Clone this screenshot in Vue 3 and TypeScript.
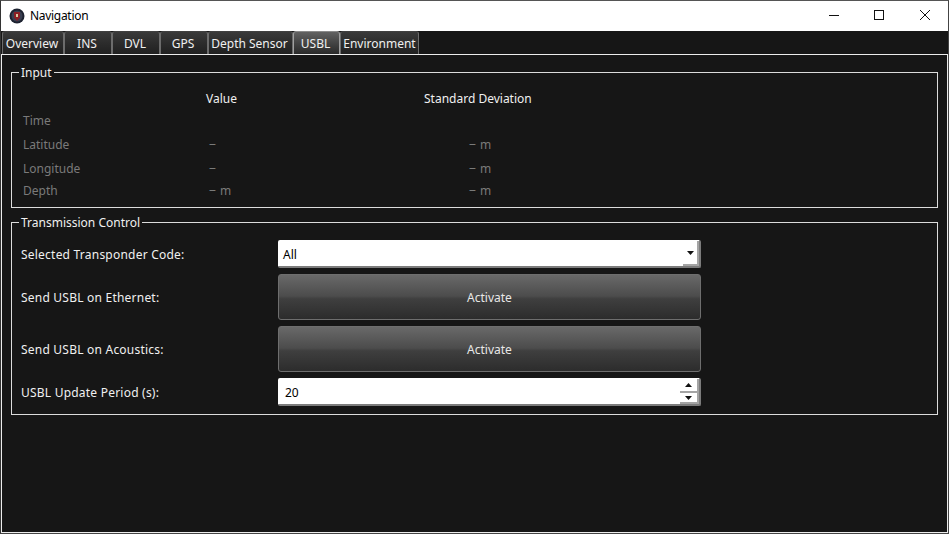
<script setup lang="ts">
const tabs = [
  { label: 'Overview', w: 62 },
  { label: 'INS', w: 48 },
  { label: 'DVL', w: 48 },
  { label: 'GPS', w: 48 },
  { label: 'Depth Sensor', w: 85 },
  { label: 'USBL', w: 47, active: true },
  { label: 'Environment', w: 79 },
]
</script>

<template>
  <div class="window">
    <header class="titlebar">
      <svg class="logo" width="16" height="16" viewBox="0 0 16 16">
        <circle cx="8" cy="8" r="7.5" fill="#1d2230" />
        <circle cx="8" cy="8" r="5.5" fill="#3a3f52" />
        <path d="M5 4h6v5.500L8 13 5 9.500z" fill="#8c1f24" />
        <path d="M7 6h2v3H7z" fill="#d8c9a0" />
      </svg>
      <span class="title">Navigation</span>
      <div class="controls">
        <svg width="46" height="30" viewBox="0 0 46 30"><path d="M19 14.500h10" stroke="#111" fill="none" /></svg>
        <svg width="46" height="30" viewBox="0 0 46 30"><rect x="18.500" y="9.500" width="9" height="9" stroke="#111" fill="none" /></svg>
        <svg width="46" height="30" viewBox="0 0 46 30"><path d="M18 9l10 10M28 9L18 19" stroke="#111" fill="none" /></svg>
      </div>
    </header>
    <main class="client">
      <nav class="tabs">
        <div
          v-for="t in tabs"
          :key="t.label"
          class="tab"
          :class="{ active: t.active }"
          :style="{ width: t.w + 'px' }"
        >{{ t.label }}</div>
      </nav>
      <section class="pane">
        <fieldset class="group input">
          <legend>Input</legend>
          <div class="grid">
            <span></span><span class="head">Value</span><span class="head sd">Standard Deviation</span>
            <span class="dim">Time</span><span></span><span></span>
            <span class="dim">Latitude</span><span class="dim val">‒</span><span class="dim ind">‒ m</span>
            <span class="dim">Longitude</span><span class="dim val">‒</span><span class="dim ind">‒ m</span>
            <span class="dim">Depth</span><span class="dim val">‒ m</span><span class="dim ind">‒ m</span>
          </div>
        </fieldset>
        <fieldset class="group control">
          <legend>Transmission Control</legend>
          <div class="form">
            <label>Selected Transponder Code:</label>
            <div class="field combo">
              <span>All</span>
              <div class="combo-btn"><svg width="7" height="4" viewBox="0 0 7 4"><path d="M0 0h7L3.500 4z" fill="#111" /></svg></div>
            </div>
            <label>Send USBL on Ethernet:</label>
            <button class="btn">Activate</button>
            <label>Send USBL on Acoustics:</label>
            <button class="btn">Activate</button>
            <label>USBL Update Period (s):</label>
            <div class="field spin">
              <span>20</span>
              <div class="spin-btns">
                <div class="step up"><svg width="7" height="4" viewBox="0 0 7 4"><path d="M0 4h7L3.500 0z" fill="#111" /></svg></div>
                <div class="step"><svg width="7" height="4" viewBox="0 0 7 4"><path d="M0 0h7L3.500 4z" fill="#111" /></svg></div>
              </div>
            </div>
          </div>
        </fieldset>
      </section>
    </main>
  </div>
</template>

<style>
html, body { margin: 0; background: #161616; }
</style>

<style scoped>
.window {
  width: 949px;
  height: 534px;
  box-sizing: border-box;
  display: flex;
  flex-direction: column;
  border-top: 1px solid #555;
  border-right: 1px solid #444;
  border-bottom: 1px solid #444;
  border-left: 1px solid #333;
  font-family: "Noto Sans", sans-serif;
  font-size: 12px;
  color: #f0f0f0;
  background: #161616;
}
.titlebar {
  height: 30px;
  flex: none;
  background: #fff;
  display: flex;
  align-items: center;
  color: #000;
}
.logo { margin-left: 8px; }
.title { margin-left: 5px; letter-spacing: -0.3px; margin-top: -1px; }
.controls { margin-left: auto; display: flex; }
.client { flex: 1; display: flex; flex-direction: column; min-height: 0; }
.tabs { display: flex; height: 23px; flex: none; padding-left: 1px; }
.tab {
  box-sizing: border-box;
  height: 23px;
  padding-right: 2px;
  text-align: center;
  line-height: 23px;
  background: linear-gradient(#3a3a3a, #2c2c2c 50%, #202020);
  border: 1px solid #6c6c6c;
  border-top-color: #404040;
  border-bottom: none;
  border-radius: 3px 3px 0 0;
  white-space: nowrap;
}
.tab.active {
  background: linear-gradient(#626262, #444 50%, #2a2a2a);
  border-color: #a0a0a0;
  border-top-color: #8a8a8a;
}
.tab:last-child { padding-right: 0; }
.pane {
  flex: 1;
  min-height: 0;
  border: 1px solid #ececec;
  padding: 9px 9px 0 9px;
  display: flex;
  flex-direction: column;
  gap: 6px;
}
.group {
  margin: 0;
  padding: 0;
  border: 1px solid #dcdcdc;
  min-width: 0;
}
.group legend {
  margin-left: 7px;
  padding: 0 2px;
  line-height: 16px;
  transform: translateY(1px);
}
.grid {
  display: grid;
  grid-template-columns: 183px 218px 1fr;
  grid-template-rows: 22px 22px 27px 21px 22px;
  align-items: center;
  padding: 7px 0 0 11px;
  height: 127px;
  box-sizing: border-box;
}
.head { color: #f0f0f0; }
.dim { color: #7a7a7a; }
.val { padding-left: 3px; word-spacing: 1px; }
.ind { padding-left: 45px; word-spacing: 1px; }
.form {
  display: grid;
  grid-template-columns: 257px 423px;
  grid-template-rows: 28px 46px 46px 28px;
  row-gap: 6px;
  align-items: center;
  padding: 10px 0 8px 9px;
}
.form label { letter-spacing: 0.22px; }
.field {
  height: 28px;
  box-sizing: border-box;
  background: #fff;
  color: #000;
  border-radius: 2px;
  border-right: 2px solid #7c7c7c;
  border-bottom: 2px solid #7c7c7c;
  position: relative;
  display: flex;
  align-items: center;
  padding: 2px 0 0 5px;
}
.spin { padding-left: 7px; }
.combo-btn {
  position: absolute;
  right: 0;
  top: 1px;
  bottom: 0;
  width: 14px;
  border-right: 2px solid #a4a4a4;
  border-bottom: 2px solid #a4a4a4;
  display: flex;
  align-items: center;
  justify-content: center;
}
.spin-btns {
  position: absolute;
  right: 0;
  top: 1px;
  bottom: 0;
  width: 19px;
  display: flex;
  flex-direction: column;
}
.step {
  flex: 1;
  border-right: 2px solid #a4a4a4;
  border-bottom: 2px solid #a4a4a4;
  display: flex;
  align-items: center;
  justify-content: center;
}
.step.up { flex: none; height: 14px; box-sizing: border-box; }
.btn {
  height: 46px;
  font: inherit;
  color: #e8e8e8;
  background: linear-gradient(#696969, #4c4c4c 48%, #3f3f3f 54%, #2c2c2c);
  border: 1px solid #6e6e6e;
  border-radius: 3px;
  padding: 0;
}
</style>
